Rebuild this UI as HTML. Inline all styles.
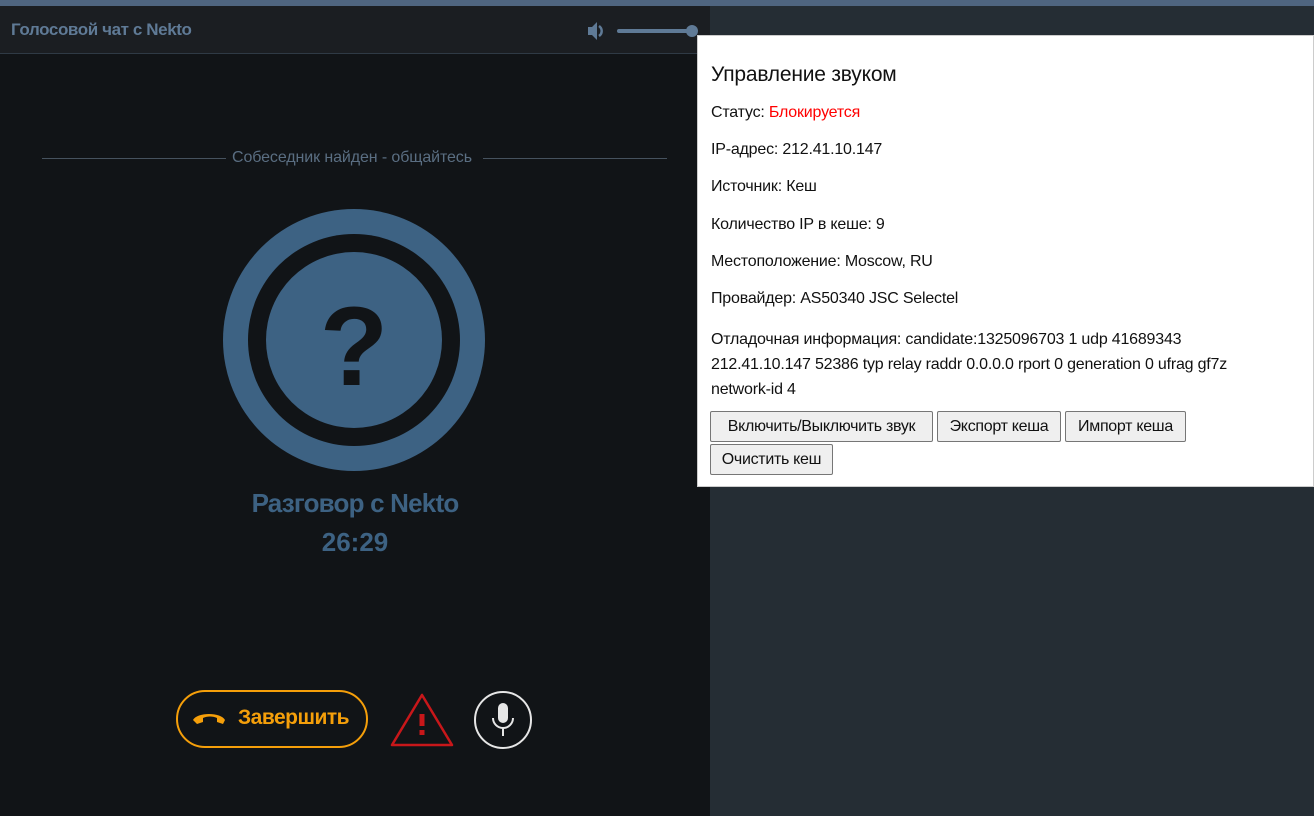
<!DOCTYPE html>
<html><head><meta charset="utf-8"><style>
*{margin:0;padding:0;box-sizing:border-box}
body{width:1314px;height:816px;overflow:hidden;position:relative;background:#252d34;font-family:"Liberation Sans","DejaVu Sans",sans-serif}
.abs{position:absolute}
#top{left:0;top:0;width:1314px;height:6px;background:#4f6580}
#left{left:0;top:6px;width:710px;height:810px;background:#111417}
#hdr{left:0;top:6px;width:710px;height:48px;background:#1b1e22;border-bottom:1px solid #2f3a45}
#hdr .t{left:11px;top:14px;color:#5f7a96;font-size:17px;font-weight:bold;letter-spacing:-0.4px}
.line{height:1px;background:#46525e}
.found{color:#5a6e82;font-size:16px;letter-spacing:-0.1px;top:149px;left:232px}
.title{left:0;width:710px;text-align:center;color:#3d6283;font-weight:bold}
.pop{left:697px;top:35px;width:617px;height:452px;background:#fff;border:1px solid #ccc}
.pt{position:absolute;left:13px;color:#111;font-size:16px;white-space:nowrap;letter-spacing:-0.2px}
.btn{position:absolute;height:31px;background:#efefef;border:1px solid #767676;border-radius:2px;font-size:16px;color:#111;text-align:center;line-height:29px;letter-spacing:-0.3px}
</style></head><body>
<div class="abs" id="top"></div>
<div class="abs" id="left"></div>
<div class="abs" id="hdr"><div class="abs t">Голосовой чат с Nekto</div></div>
<svg class="abs" style="left:586px;top:20px" width="116" height="22" viewBox="0 0 116 22">
<path d="M2 7h4l5-5v18l-5-5H2z" fill="#5f7a96"/><path d="M13 6a6 6 0 0 1 0 10" stroke="#5f7a96" stroke-width="2.5" fill="none"/>
<rect x="31" y="9" width="75" height="4" rx="2" fill="#5f7a96"/><circle cx="106" cy="11" r="6" fill="#5f7a96"/></svg>
<div class="abs line" style="left:42px;top:158px;width:184px"></div>
<div class="abs line" style="left:483px;top:158px;width:184px"></div>
<div class="abs found">Собеседник найден - общайтесь</div>
<svg class="abs" style="left:223px;top:209px" width="262" height="262" viewBox="0 0 262 262">
<circle cx="131" cy="131" r="131" fill="#3d6283"/><circle cx="131" cy="131" r="106" fill="#111417"/><circle cx="131" cy="131" r="88" fill="#3d6283"/>
<text x="131" y="176" text-anchor="middle" font-family="Liberation Sans" font-weight="bold" font-size="112" fill="#111417">?</text></svg>
<div class="abs title" style="top:488px;font-size:26px;letter-spacing:-0.8px">Разговор с Nekto</div>
<div class="abs title" style="top:527px;font-size:26px">26:29</div>
<div class="abs" style="left:176px;top:690px;width:192px;height:58px;border:2px solid #f59f0a;border-radius:29px"></div>
<svg class="abs" style="left:191px;top:710px" width="36" height="16" viewBox="0 0 36 16"><path d="M2 10c4-8 28-8 32 0l-2 4-6-2v-4c-4-2-10-2-14 0v4l-6 2z" fill="#f59f0a"/></svg>
<div class="abs" style="left:238px;top:706px;color:#f59f0a;font-size:21px;font-weight:bold;letter-spacing:-0.5px">Завершить</div>
<svg class="abs" style="left:390px;top:692px" width="64" height="56" viewBox="0 0 64 56"><path d="M32 3L2 53h60z" fill="none" stroke="#c8171a" stroke-width="2.5" stroke-linejoin="round"/><rect x="29.5" y="22" width="5" height="12" fill="#c8171a"/><rect x="29.5" y="38" width="5" height="5" fill="#c8171a"/></svg>
<svg class="abs" style="left:473px;top:690px" width="60" height="60" viewBox="0 0 60 60"><circle cx="30" cy="30" r="28" fill="none" stroke="#e6e6e6" stroke-width="2"/><rect x="25" y="13" width="10" height="20" rx="5" fill="#e6e6e6"/><path d="M20 28a10 10 0 0 0 20 0" stroke="#e6e6e6" stroke-width="2" fill="none"/><rect x="29" y="38" width="2" height="8" fill="#e6e6e6"/></svg>
<div class="abs pop">
<div class="pt" style="top:27px;font-size:21px">Управление звуком</div>
<div class="pt" style="top:68px">Статус: <span style="color:#f00">Блокируется</span></div>
<div class="pt" style="top:105px">IP-адрес: 212.41.10.147</div>
<div class="pt" style="top:142px">Источник: Кеш</div>
<div class="pt" style="top:180px">Количество IP в кеше: 9</div>
<div class="pt" style="top:217px">Местоположение: Moscow, RU</div>
<div class="pt" style="top:254px">Провайдер: AS50340 JSC Selectel</div>
<div class="pt" style="top:291px;line-height:25px">Отладочная информация: candidate:1325096703 1 udp 41689343<br>212.41.10.147 52386 typ relay raddr 0.0.0.0 rport 0 generation 0 ufrag gf7z<br>network-id 4</div>
<div class="btn" style="left:12px;top:375px;width:223px">Включить/Выключить звук</div>
<div class="btn" style="left:239px;top:375px;width:124px">Экспорт кеша</div>
<div class="btn" style="left:367px;top:375px;width:121px">Импорт кеша</div>
<div class="btn" style="left:12px;top:408px;width:123px">Очистить кеш</div>
</div>
</body></html>
